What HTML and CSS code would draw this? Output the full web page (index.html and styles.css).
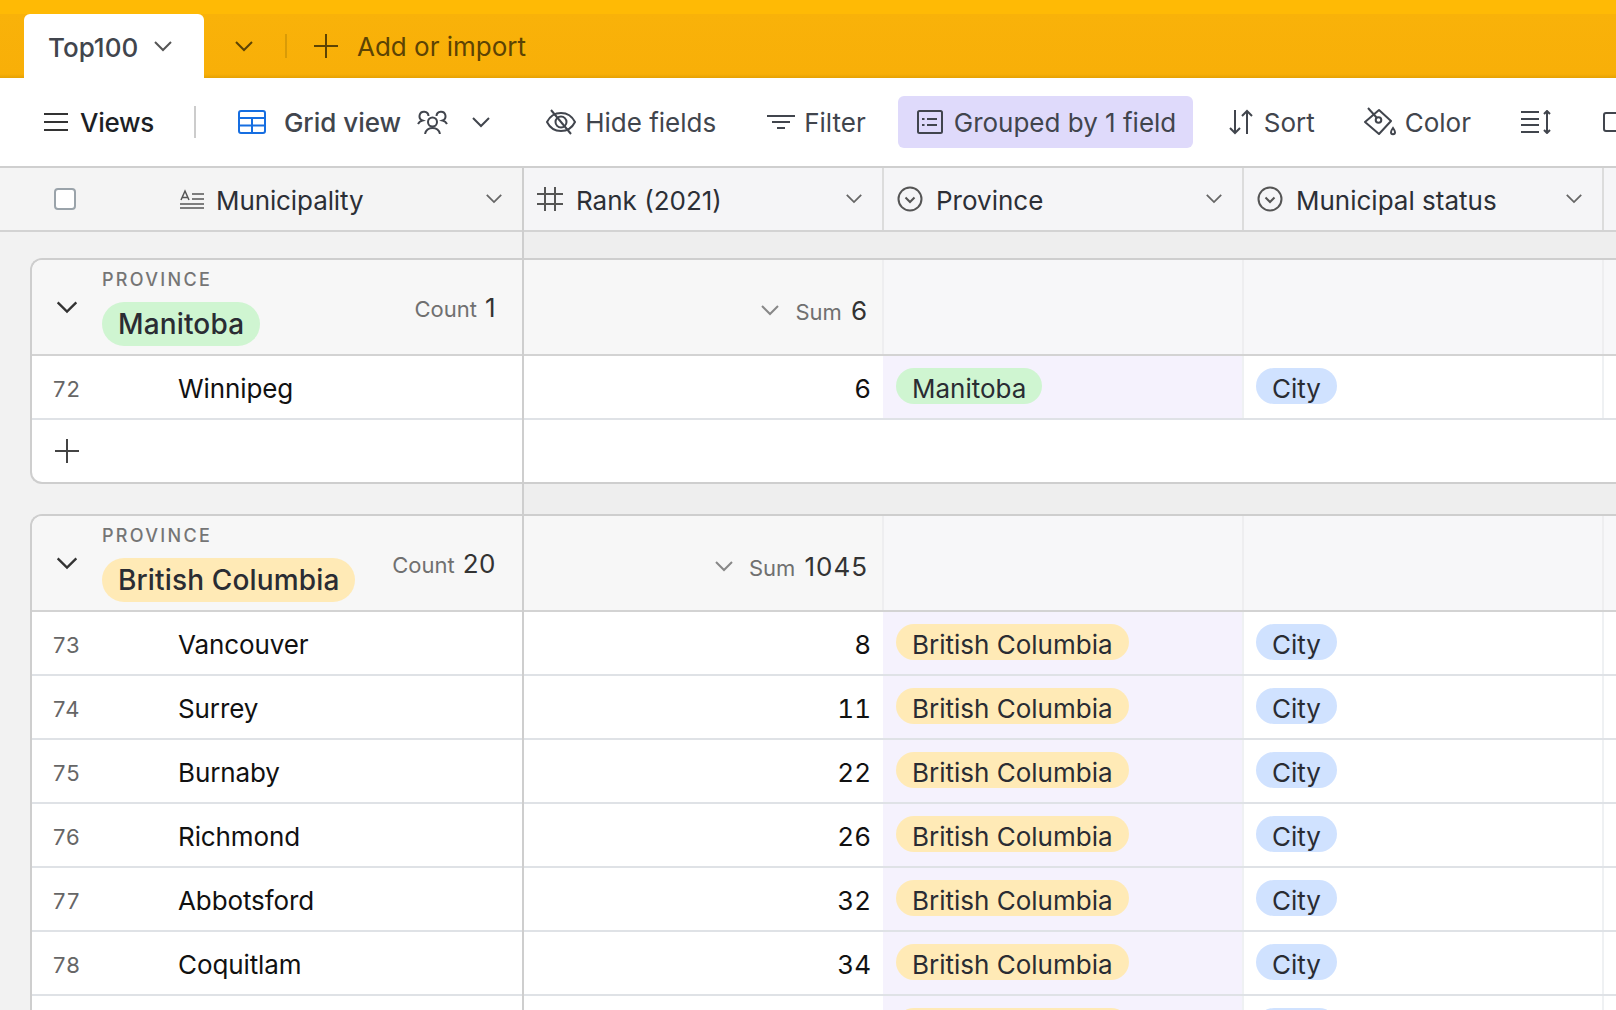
FILE: index.html
```html
<!DOCTYPE html>
<html lang="en">
<head>
    <meta charset="utf-8">
    <title>Top100</title>
    <link rel="stylesheet" href="styles.css">
</head>
<body>
    <svg class="defs" width="0" height="0">
        <symbol id="chev" viewBox="0 0 20 12"><path d="M2 2l8 8 8-8" fill="none" stroke="currentColor" stroke-width="2"/></symbol>
        <symbol id="plus" viewBox="0 0 24 24"><path d="M12 0v24M0 12h24" fill="none" stroke="currentColor" stroke-width="2"/></symbol>
        <symbol id="select" viewBox="0 0 26 26"><circle cx="13" cy="13" r="11.5" fill="none" stroke="currentColor" stroke-width="2"/><path d="M8.5 11.5l4.5 4.5 4.5-4.5" fill="none" stroke="currentColor" stroke-width="2"/></symbol>
    </svg>

    <header class="basebar">
        <div class="tab">
            <span>Top100</span>
            <svg class="chev-sm"><use href="#chev"/></svg>
        </div>
        <svg class="chev-bar"><use href="#chev"/></svg>
        <div class="bar-div"></div>
        <svg class="bar-plus"><use href="#plus"/></svg>
        <span class="add-import">Add or import</span>
    </header>

    <nav class="toolbar">
        <svg class="ic-menu" viewBox="0 0 24 20"><path d="M0 2h24M0 10h24M0 18h24" fill="none" stroke="currentColor" stroke-width="2"/></svg>
        <b class="tb-views">Views</b>
        <div class="tb-div"></div>
        <svg class="ic-grid" viewBox="0 0 28 24"><rect x="1" y="1" width="26" height="22" rx="2" fill="none" stroke="#166ee1" stroke-width="2"/><path d="M1 8h26M1 15.500h26M14 8v15" fill="none" stroke="#166ee1" stroke-width="2"/></svg>
        <b class="tb-gridview">Grid view</b>
        <svg class="ic-people" viewBox="0 0 32 24" fill="none" stroke="currentColor" stroke-width="2"><circle cx="15.500" cy="12" r="4.500"/><path d="M8 24c.8-3.500 3.800-6 7.500-6s6.700 2.500 7.500 6"/><path d="M11.500 6a4.500 4.500 0 1 0-6 4.500C3.500 11 2 12 1 14"/><path d="M19.500 6a4.500 4.500 0 1 1 6 4.500c2 .5 3.500 1.500 4.500 3.500"/></svg>
        <svg class="chev-tb"><use href="#chev"/></svg>

        <svg class="ic-eye" viewBox="0 0 30 26" fill="none" stroke="currentColor" stroke-width="2"><path d="M1 13c3-6 8-9 14-9s11 3 14 9c-3 6-8 9-14 9S4 19 1 13z"/><circle cx="15" cy="13" r="5.500"/><path d="M5 1l20 24"/></svg>
        <span class="tb-text t-hide">Hide fields</span>

        <svg class="ic-filter" viewBox="0 0 28 16"><path d="M0 2h28M5 8h18M10 14h8" fill="none" stroke="currentColor" stroke-width="2"/></svg>
        <span class="tb-text t-filter">Filter</span>

        <div class="tb-active">
            <svg class="ic-group" viewBox="0 0 26 24" fill="none" stroke="currentColor" stroke-width="2"><rect x="1" y="1" width="24" height="22" rx="1.500"/><path d="M10 9h10M10 15h10M5 9h2.500M5 15h2.500"/></svg>
            <span class="tb-text">Grouped by 1 field</span>
        </div>

        <svg class="ic-sort" viewBox="0 0 24 26" fill="none" stroke="currentColor" stroke-width="2"><path d="M6 1v23M1 19l5 5 5-5M18 25V2M13 7l5-5 5 5"/></svg>
        <span class="tb-text t-sort">Sort</span>

        <svg class="ic-color" viewBox="0 0 32 30" fill="none" stroke="currentColor" stroke-width="2"><path d="M15 3l12 11-12 13L1 15z" stroke-linejoin="round"/><circle cx="14.500" cy="13" r="2.800"/><path d="M4 1l9 10"/><path d="M29 21c1.500 2 2 3 2 4.300a2 2 0 0 1-4 0c0-1.300.5-2.300 2-4.300z"/></svg>
        <span class="tb-text t-color">Color</span>

        <svg class="ic-height" viewBox="0 0 30 24" fill="none" stroke="currentColor" stroke-width="2"><path d="M0 2h18M0 9h18M0 15h18M0 22h18M26 2v20"/><path d="M23 4l3-3 3 3M23 20l3 3 3-3"/></svg>
        <svg class="ic-share" viewBox="0 0 20 20"><path d="M20 1H3a2 2 0 0 0-2 2v14a2 2 0 0 0 2 2h17" fill="none" stroke="currentColor" stroke-width="2"/></svg>
    </nav>

    <main class="grid">
        <section class="pane-left">
            <div class="head head-left">
                <span class="check"></span>
                <svg class="ic-text" viewBox="0 0 24 20" fill="none" stroke="currentColor"><path d="M12 5h12M12 10h12M0 15h24M0 19h24" stroke-width="1.700"/><path d="M1 11l4-9 4 9M2.500 8.500h5" stroke-width="1.500"/></svg>
                <span class="head-label">Municipality</span>
                <svg class="chev-head"><use href="#chev"/></svg>
            </div>

            <div class="spacer-first"></div>
            <div class="card">
                <div class="group-left">
                    <svg class="chev-group"><use href="#chev"/></svg>
                    <div class="group-title">
                        <div class="group-field">PROVINCE</div>
                        <span class="pill-big green">Manitoba</span>
                    </div>
                    <div class="count">Count <em>1</em></div>
                </div>
                <div class="row-left"><span class="num">72</span><span class="name">Winnipeg</span></div>
                <div class="row-add"><svg class="add-plus"><use href="#plus"/></svg></div>
            </div>

            <div class="spacer"></div>
            <div class="card card-open">
                <div class="group-left">
                    <svg class="chev-group"><use href="#chev"/></svg>
                    <div class="group-title">
                        <div class="group-field">PROVINCE</div>
                        <span class="pill-big yellow">British Columbia</span>
                    </div>
                    <div class="count">Count <em>20</em></div>
                </div>
                <div class="row-left"><span class="num">73</span><span class="name">Vancouver</span></div>
                <div class="row-left"><span class="num">74</span><span class="name">Surrey</span></div>
                <div class="row-left"><span class="num">75</span><span class="name">Burnaby</span></div>
                <div class="row-left"><span class="num">76</span><span class="name">Richmond</span></div>
                <div class="row-left"><span class="num">77</span><span class="name">Abbotsford</span></div>
                <div class="row-left"><span class="num">78</span><span class="name">Coquitlam</span></div>
                <div class="row-left"></div>
            </div>
        </section>

        <section class="pane-right">
            <div class="head">
                <div class="hcell">
                    <svg class="ic-hash" viewBox="0 0 26 26"><path d="M8 1v24M18 1v24M0 8h26M0 18h26" fill="none" stroke="currentColor" stroke-width="2"/></svg>
                    <span class="head-label">Rank (2021)</span>
                    <svg class="chev-head"><use href="#chev"/></svg>
                </div>
                <div class="hcell">
                    <svg class="ic-select"><use href="#select"/></svg>
                    <span class="head-label">Province</span>
                    <svg class="chev-head"><use href="#chev"/></svg>
                </div>
                <div class="hcell">
                    <svg class="ic-select"><use href="#select"/></svg>
                    <span class="head-label">Municipal status</span>
                    <svg class="chev-head"><use href="#chev"/></svg>
                </div>
                <div class="hcell"></div>
            </div>

            <div class="spacer-first"></div>
            <div class="band">
                <div class="group-right">
                    <div class="gcell gcell-sum"><svg class="chev-sum"><use href="#chev"/></svg><span class="sum">Sum</span><em>6</em></div>
                    <div class="gcell"></div>
                    <div class="gcell"></div>
                    <div class="gcell"></div>
                </div>
                <div class="row-right">
                    <div class="cell cell-rank">6</div>
                    <div class="cell cell-tint"><span class="pill green">Manitoba</span></div>
                    <div class="cell"><span class="pill blue">City</span></div>
                    <div class="cell"></div>
                </div>
                <div class="row-empty"></div>
            </div>

            <div class="spacer"></div>
            <div class="band band-open">
                <div class="group-right">
                    <div class="gcell gcell-sum"><svg class="chev-sum"><use href="#chev"/></svg><span class="sum">Sum</span><em>1045</em></div>
                    <div class="gcell"></div>
                    <div class="gcell"></div>
                    <div class="gcell"></div>
                </div>
                <div class="row-right">
                    <div class="cell cell-rank">8</div>
                    <div class="cell cell-tint"><span class="pill yellow">British Columbia</span></div>
                    <div class="cell"><span class="pill blue">City</span></div>
                    <div class="cell"></div>
                </div>
                <div class="row-right">
                    <div class="cell cell-rank">11</div>
                    <div class="cell cell-tint"><span class="pill yellow">British Columbia</span></div>
                    <div class="cell"><span class="pill blue">City</span></div>
                    <div class="cell"></div>
                </div>
                <div class="row-right">
                    <div class="cell cell-rank">22</div>
                    <div class="cell cell-tint"><span class="pill yellow">British Columbia</span></div>
                    <div class="cell"><span class="pill blue">City</span></div>
                    <div class="cell"></div>
                </div>
                <div class="row-right">
                    <div class="cell cell-rank">26</div>
                    <div class="cell cell-tint"><span class="pill yellow">British Columbia</span></div>
                    <div class="cell"><span class="pill blue">City</span></div>
                    <div class="cell"></div>
                </div>
                <div class="row-right">
                    <div class="cell cell-rank">32</div>
                    <div class="cell cell-tint"><span class="pill yellow">British Columbia</span></div>
                    <div class="cell"><span class="pill blue">City</span></div>
                    <div class="cell"></div>
                </div>
                <div class="row-right">
                    <div class="cell cell-rank">34</div>
                    <div class="cell cell-tint"><span class="pill yellow">British Columbia</span></div>
                    <div class="cell"><span class="pill blue">City</span></div>
                    <div class="cell"></div>
                </div>
                <div class="row-right">
                    <div class="cell cell-rank"></div>
                    <div class="cell cell-tint"><span class="pill yellow stub-prov"></span></div>
                    <div class="cell"><span class="pill blue stub-city"></span></div>
                    <div class="cell"></div>
                </div>
            </div>
        </section>
    </main>
</body>
</html>
```

FILE: styles.css
```css
* {
    box-sizing: border-box;
}

html, body {
    margin: 0;
    height: 1010px;
    overflow: hidden;
}

body {
    font-family: Inter, "Noto Sans", sans-serif;
    font-size: 26px;
    color: #1d1f25;
    background: #fff;
    white-space: nowrap;
}

svg {
    display: block;
    flex: none;
}

em {
    font-style: normal;
}

.defs {
    position: absolute;
}

/* top colored bar */
.basebar {
    display: flex;
    align-items: flex-end;
    height: 78px;
    padding-left: 24px;
    color: #5c4304;
    background: linear-gradient(#ffba05 0, #ffba05 14px, #f9b209 14px, #f8af08 74px, #e5a103 78px);
}

.tab {
    display: flex;
    align-items: center;
    width: 180px;
    height: 64px;
    padding: 2px 0 0 24px;
    color: #41454d;
    font-weight: 500;
    font-size: 26px;
    background: #fff;
    border-radius: 6px 6px 0 0;
}

.chev-sm {
    width: 20px;
    height: 12px;
    margin: -2px 0 0 15px;
    color: #555;
}

.chev-bar {
    align-self: center;
    width: 20px;
    height: 12px;
    margin: 14px 0 0 30px;
}

.bar-div {
    align-self: center;
    width: 2px;
    height: 24px;
    margin: 14px 0 0 31px;
    background: #d99b07;
}

.bar-plus {
    align-self: center;
    width: 24px;
    height: 24px;
    margin: 14px 0 0 27px;
}

.add-import {
    align-self: center;
    margin: 14px 0 0 19px;
    font-size: 26px;
}

/* view toolbar */
.toolbar {
    display: flex;
    align-items: center;
    height: 88px;
    padding-left: 44px;
    color: #41454d;
    overflow: hidden;
}

.tb-views,
.tb-gridview {
    font-weight: 500;
}

.tb-views {
    margin-left: 12px;
    color: #1d1f25;
    letter-spacing: -.3px;
}

.ic-menu {
    width: 24px;
    height: 20px;
    color: #333;
}

.tb-div {
    flex: none;
    width: 2px;
    height: 32px;
    margin-left: 40px;
    background: #ccc;
}

.ic-grid {
    width: 28px;
    height: 24px;
    margin-left: 42px;
}

.tb-gridview {
    margin-left: 18px;
}

.ic-people {
    width: 32px;
    height: 24px;
    margin-left: 16px;
}

.chev-tb {
    width: 20px;
    height: 12px;
    margin-left: 22px;
}

.ic-eye {
    width: 30px;
    height: 26px;
    margin-left: 55px;
}

.t-hide {
    margin-left: 9px;
}

.ic-filter {
    width: 28px;
    height: 16px;
    margin-left: 51px;
}

.t-filter {
    margin-left: 9px;
}

.tb-active {
    display: flex;
    align-items: center;
    flex: none;
    width: 295px;
    height: 52px;
    margin-left: 32px;
    padding-left: 19px;
    background: #dfdafb;
    border-radius: 6px;
}

.ic-group {
    width: 26px;
    height: 24px;
    margin-right: 11px;
}

.ic-sort {
    width: 24px;
    height: 26px;
    margin-left: 36px;
}

.t-sort {
    margin-left: 11px;
}

.ic-color {
    width: 32px;
    height: 30px;
    margin-left: 49px;
}

.t-color {
    margin-left: 9px;
}

.ic-height {
    width: 30px;
    height: 24px;
    margin-left: 50px;
}

.ic-share {
    width: 20px;
    height: 20px;
    margin-left: 52px;
}

/* grid */
.grid {
    display: flex;
    height: 844px;
    overflow: hidden;
    border-top: 2px solid #cfcfcf;
}

.pane-left {
    flex: none;
    width: 524px;
    background: #f2f2f2;
    border-right: 2px solid #cecece;
}

.pane-right {
    flex: 1;
    min-width: 0;
    background: #eeeeee;
}

.head {
    display: flex;
    align-items: center;
    height: 64px;
    background: #f5f5f7;
    border-bottom: 2px solid #d3d3d3;
}

.head-left {
    padding-left: 54px;
    background: #f4f4f4;
}

.check {
    flex: none;
    width: 22px;
    height: 22px;
    background: #fff;
    border: 2px solid #9aa3aa;
    border-radius: 4px;
}

.ic-text {
    width: 24px;
    height: 20px;
    margin-left: 104px;
    color: #555;
}

.head-label {
    flex: 1;
    margin-left: 13px;
    padding-top: 2px;
    color: #2c2f36;
}

.head-left .head-label {
    margin-left: 12px;
    letter-spacing: -.1px;
}

.chev-head {
    width: 18px;
    height: 11px;
    margin: -2px 19px 0 0;
    color: #666;
}

.hcell {
    display: flex;
    align-items: center;
    flex: none;
    width: 360px;
    height: 100%;
    padding-left: 13px;
    border-right: 2px solid #dcdcdc;
}

.ic-hash {
    width: 26px;
    height: 26px;
    color: #555;
}

.ic-select {
    width: 26px;
    height: 26px;
    color: #555;
}

.spacer-first {
    height: 26px;
}

.spacer {
    height: 30px;
}

/* left side group */
.card {
    margin-left: 30px;
    overflow: hidden;
    background: #fff;
    border: 2px solid #cecece;
    border-right: 0;
    border-radius: 12px 0 0 12px;
}

.card-open {
    border-radius: 12px 0 0 0;
}

.group-left {
    display: flex;
    align-items: center;
    height: 96px;
    padding-left: 23px;
    background: #f7f7f7;
    border-bottom: 2px solid #d3d3d3;
}

.chev-group {
    width: 24px;
    height: 14px;
    color: #333;
}

.group-title {
    flex: 1;
    min-width: 0;
    margin: 0 0 0 23px;
}

.group-field {
    height: 22px;
    margin: 0 0 11px 0;
    color: #757575;
    font-size: 18px;
    font-weight: 500;
    line-height: 22px;
    letter-spacing: 2.300px;
}

.pill-big {
    display: inline-block;
    height: 44px;
    padding: 0 16px;
    font-size: 28px;
    font-weight: 500;
    line-height: 44px;
    letter-spacing: .15px;
    color: #2a2c33;
    border-radius: 22px;
}

.count {
    display: flex;
    align-items: baseline;
    gap: 8px;
    margin: 0 26px 0 0;
    color: #707070;
    font-size: 22px;
}

.count em,
.gcell-sum em {
    color: #333;
    font-size: 26px;
    letter-spacing: .5px;
}

.gcell-sum em {
    letter-spacing: 1px;
}

.row-left {
    display: flex;
    align-items: center;
    height: 64px;
    padding-top: 2px;
    background: #fff;
    border-bottom: 2px solid #dfe2e6;
}

.num {
    flex: none;
    width: 146px;
    padding: 2px 0 0 21px;
    color: #666;
    font-size: 22px;
    letter-spacing: 1px;
}

.row-add {
    display: flex;
    align-items: center;
    height: 62px;
    padding-left: 23px;
}

.add-plus {
    width: 24px;
    height: 24px;
    color: #444;
}

.green {
    background: #cff5d1;
}

.yellow {
    background: #ffeab6;
}

.blue {
    background: #d0e2ff;
}

/* right side group */
.band {
    background: #fff;
    border-top: 2px solid #cecece;
    border-bottom: 2px solid #cecece;
}

.band-open {
    border-bottom: 0;
}

.group-right {
    display: flex;
    height: 96px;
    background: #f7f7f9;
    border-bottom: 2px solid #d3d3d3;
}

.gcell {
    flex: none;
    width: 360px;
    border-right: 2px solid #eeeef0;
}

.gcell-sum {
    display: flex;
    align-items: baseline;
    justify-content: flex-end;
    padding: 35px 14px 0 0;
    gap: 9px;
    background: #f7f7f7;
}

.chev-sum {
    align-self: flex-start;
    width: 20px;
    height: 12px;
    margin: 9px 6px 0 0;
    color: #888;
}

.sum {
    color: #707070;
    font-size: 22px;
}

.row-right {
    display: flex;
    height: 64px;
    border-bottom: 2px solid #dfe2e6;
}

.row-empty {
    height: 62px;
}

.cell {
    flex: none;
    width: 360px;
    height: 62px;
    padding: 12px 0 0 12px;
    border-right: 2px solid #eff1f3;
}

.cell-rank {
    width: 359px;
    padding: 0 12px 0 0;
    font-variant-numeric: tabular-nums;
    line-height: 66px;
    text-align: right;
    color: #111;
    border-right: 0;
}

.cell-tint {
    width: 361px;
    padding-left: 13px;
    background: #f5f2fd;
}

.pill {
    display: inline-block;
    height: 36px;
    padding: 0 16px;
    color: #2a2c33;
    line-height: 42px;
    border-radius: 18px;
    overflow: hidden;
}

.stub-prov {
    width: 233px;
}

.stub-city {
    width: 81px;
}

.name {
    color: #111;
    letter-spacing: -.1px;
}
```
